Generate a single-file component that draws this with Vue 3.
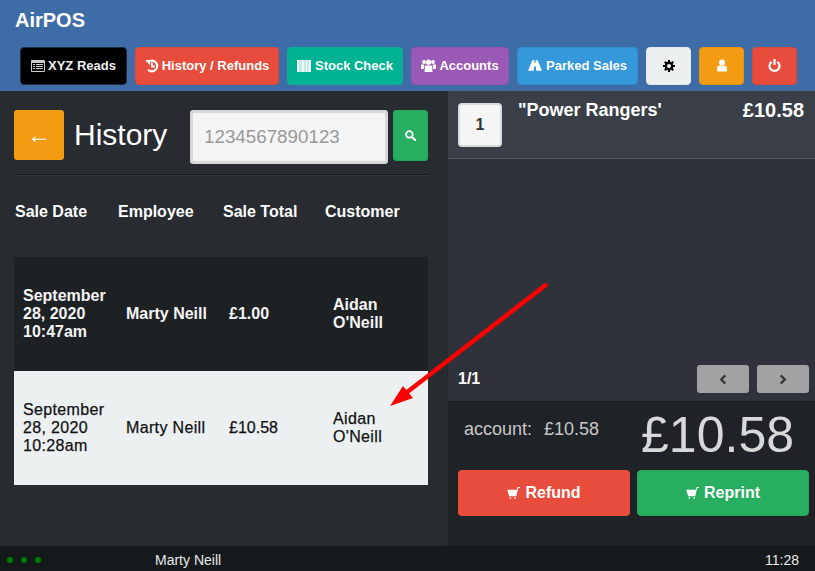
<script setup>
const rows = [
  { date: 'September 28, 2020 10:47am', emp: 'Marty Neill', total: '£1.00', cust: "Aidan O'Neill", cls: 'dark' },
  { date: 'September 28, 2020 10:28am', emp: 'Marty Neill', total: '£10.58', cust: "Aidan O'Neill", cls: 'light' }
]
</script>

<template>
  <div class="app">
    <header class="top">
      <div class="brand">AirPOS</div>
      <nav class="tools">
        <button class="btn black">
          <svg class="ic" viewBox="0 0 14 12" width="14" height="12"><path fill="currentColor" fill-rule="evenodd" d="M1 0h12a1 1 0 0 1 1 1v10a1 1 0 0 1-1 1H1a1 1 0 0 1-1-1V1a1 1 0 0 1 1-1zM1 3v8h12V3zM2 4h2v1H2zM5 4h7v1H5zM2 6h2v1H2zM5 6h7v1H5zM2 8h2v1H2zM5 8h7v1H5z"/></svg>
          XYZ Reads
        </button>
        <button class="btn red">
          <svg class="ic" viewBox="0 0 14 14" width="14" height="14"><path fill="none" stroke="currentColor" stroke-width="2.2" d="M3 3.2A5.4 5.4 0 1 1 3 10.8"/><path fill="currentColor" d="M0 1h5.5L5 6z"/><path fill="none" stroke="currentColor" stroke-width="1.8" d="M7 3.5V7.5H10"/></svg>
          History / Refunds
        </button>
        <button class="btn teal">
          <svg class="ic" viewBox="0 0 14 12" width="14" height="12"><path fill="currentColor" opacity=".75" d="M0 0h14v12H0z"/><path fill="currentColor" d="M0 0h2v12H0zM5 0h1.5v12H5zM9 0h1v12H9zM12 0h2v12h-2z"/></svg>
          Stock Check
        </button>
        <button class="btn purple">
          <svg class="ic" viewBox="0 0 15 13" width="15" height="13"><g fill="currentColor"><circle cx="3" cy="3" r="2"/><circle cx="12" cy="3" r="2"/><circle cx="7.5" cy="3.2" r="2.6"/><path d="M0 5.5h3.2L3 10H0zM15 5.5h-3.2L12 10h3zM4 6.5h7l.5 6.5h-8z"/></g></svg>
          Accounts
        </button>
        <button class="btn blue">
          <svg class="ic" viewBox="0 0 16 12" width="14" height="11"><path fill="currentColor" d="M5 0h2.3v3h1.4V0H11l5 12H9.5L9 7H7l-.5 5H0z"/></svg>
          Parked Sales
        </button>
        <button class="btn white" aria-label="Settings">
          <svg viewBox="0 0 12 12" width="12" height="12"><circle cx="6" cy="6" r="3.2" fill="none" stroke="#000" stroke-width="2.2"/><path stroke="#000" stroke-width="2.2" d="M6 0v2.4M6 9.6V12M0 6h2.4M9.6 6H12M1.8 1.8l1.7 1.7M8.5 8.5l1.7 1.7M10.2 1.8 8.5 3.5M3.5 8.5l-1.7 1.7"/></svg>
        </button>
        <button class="btn orange" aria-label="User">
          <svg viewBox="0 0 12 12" width="12" height="13"><circle cx="6" cy="3" r="3" fill="#fff"/><path fill="#fff" d="M1 12V8.5Q1 6.5 3.5 6h5Q11 6.5 11 8.5V12z"/></svg>
        </button>
        <button class="btn red" aria-label="Power">
          <svg viewBox="0 0 12 12" width="13" height="13"><path fill="none" stroke="#fff" stroke-width="2" d="M3.4 2.6a4.6 4.6 0 1 0 5.2 0"/><path stroke="#fff" stroke-width="2" d="M6 0v5.4"/></svg>
        </button>
      </nav>
    </header>

    <main class="main">
      <section class="left">
        <div class="searchbar">
          <button class="back">←</button>
          <h1 class="title">History</h1>
          <input class="search" placeholder="1234567890123" />
          <button class="go" aria-label="Search">
            <svg viewBox="0 0 12 12" width="11" height="11"><circle cx="4.8" cy="4.8" r="3.6" fill="none" stroke="#fff" stroke-width="2"/><path stroke="#fff" stroke-width="2.2" stroke-linecap="round" d="M7.6 7.6 11 11"/></svg>
          </button>
        </div>
        <div class="thead">
          <span>Sale Date</span><span>Employee</span><span>Sale Total</span><span>Customer</span>
        </div>
        <div v-for="r in rows" :key="r.total" class="row" :class="r.cls">
          <span>{{ r.date }}</span><span>{{ r.emp }}</span><span class="amount">{{ r.total }}</span><span>{{ r.cust }}</span>
        </div>
      </section>

      <section class="right">
        <div class="item">
          <div class="qty">1</div>
          <div class="name">"Power Rangers'</div>
          <div class="price">£10.58</div>
        </div>
        <div class="items-space">
          <strong class="page">1/1</strong>
          <div class="pager">
            <button class="nav" aria-label="Previous"><svg viewBox="0 0 8 12" width="8" height="11"><path fill="none" stroke="#333" stroke-width="2.4" d="M6.5 1.5 2 6l4.5 4.5"/></svg></button>
            <button class="nav" aria-label="Next"><svg viewBox="0 0 8 12" width="8" height="11"><path fill="none" stroke="#333" stroke-width="2.4" d="M1.5 1.5 6 6l-4.5 4.5"/></svg></button>
          </div>
        </div>
        <div class="totals">
          <div class="sum">
            <div class="pay"><span>account:</span><span>£10.58</span></div>
            <div class="grand">£10.58</div>
          </div>
          <div class="actions">
            <button class="act red">
              <svg viewBox="0 0 14 13" width="13" height="12"><path fill="#fff" d="M0 3h10.5l.7-2.6L14 0v1l-2 .3L10 10H2.4zM2.8 11h1.6v1.6H2.8zM8 11h1.6v1.6H8z"/></svg>
              Refund
            </button>
            <button class="act green">
              <svg viewBox="0 0 14 13" width="13" height="12"><path fill="#fff" d="M0 3h10.5l.7-2.6L14 0v1l-2 .3L10 10H2.4zM2.8 11h1.6v1.6H2.8zM8 11h1.6v1.6H8z"/></svg>
              Reprint
            </button>
          </div>
        </div>
      </section>
    </main>

    <footer class="foot">
      <div class="dots"><i></i><i></i><i></i></div>
      <span class="user">Marty Neill</span>
      <span class="clock">11:28</span>
    </footer>

    <svg class="arrow" viewBox="0 0 815 571" width="815" height="571">
      <path stroke="#f00" stroke-width="4.5" d="M547 284 406 393"/>
      <path fill="#f00" d="M390 406 403 386 413 398z"/>
    </svg>
  </div>
</template>

<style>
html, body { margin: 0; background: #282b30; }
</style>

<style scoped>
.app {
  position: relative;
  width: 815px;
  height: 571px;
  overflow: hidden;
  display: flex;
  flex-direction: column;
  font-family: "Liberation Sans", Arial, sans-serif;
  color: #fff;
  background: #282b30;
}
button { font-family: inherit; cursor: pointer; padding: 0; }

.top {
  flex: 0 0 91px;
  box-sizing: border-box;
  background: #3e6ca6;
  padding: 9px 0 0 15px;
}
.brand { font-size: 20px; font-weight: 700; line-height: 23px; }
.tools {
  margin: 15px 0 0 5px;
  display: grid;
  grid-template-columns: 107px 144px 116px 98px 121px 45px 45px 45px;
  column-gap: 8px;
  height: 38px;
}
.btn {
  display: flex;
  align-items: center;
  justify-content: center;
  gap: 3px;
  height: 38px;
  padding-bottom: 1px;
  border-radius: 4px;
  font-size: 13px;
  font-weight: 700;
  color: #fff;
  white-space: nowrap;
  border: 1px solid transparent;
  box-sizing: border-box;
}
.ic { flex: none; }
.black { background: #000; border-color: #1d2b40; color: #f0f0f0; }
.black .ic { color: #ccc; }
.red { background: #e74c3c; border-color: #d9493a; }
.teal { background: #00b294; border-color: #0fae95; gap: 4px; }
.purple { background: #9b59b6; border-color: #9354ad; }
.blue { background: #3498db; border-color: #2f8ccb; gap: 4px; }
.white { background: #ecf0f1; border-color: #e4e8ea; }
.orange { background: #f39c12; border-color: #e6940f; }

.main { flex: 1; display: flex; min-height: 0; }
.left {
  flex: 0 0 448px;
  min-width: 0;
  box-sizing: border-box;
  padding: 19px 20px 0 14px;
  background: #282b30;
  box-shadow: inset -1px 0 0 #24272b;
}
.searchbar {
  display: flex;
  align-items: flex-start;
  height: 64px;
  border-bottom: 1px solid #17191c;
  box-shadow: 0 1px 0 #33363b;
}
.back {
  flex: none;
  width: 50px;
  height: 50px;
  border: none;
  border-radius: 3px;
  background: #f39c12;
  color: #fff;
  font-size: 24px;
  line-height: 50px;
}
.title {
  margin: 0 24px 0 10px;
  width: 92px;
  font-size: 30px;
  font-weight: 400;
  line-height: 50px;
  white-space: nowrap;
}
.search {
  width: 198px;
  height: 54px;
  box-sizing: border-box;
  padding: 0 11px;
  background: #f5f5f5;
  border: 3px solid #d8d8d8;
  border-radius: 3px;
  font-family: inherit;
  font-size: 18.8px;
  outline: none;
}
.search::placeholder { color: #999; opacity: 1; }
.go {
  margin-left: 5px;
  width: 35px;
  height: 51px;
  border: 1px solid #25a65b;
  border-radius: 3px;
  background: #27ae60;
  display: flex;
  align-items: center;
  justify-content: center;
}
.thead, .row {
  display: grid;
  grid-template-columns: 103px 105px 102px 104px;
}
.thead {
  height: 82px;
  padding-top: 27px;
  box-sizing: border-box;
  font-size: 16px;
  font-weight: 700;
  line-height: 20px;
}
.thead span { padding-left: 1px; }
.row {
  height: 114px;
  align-items: center;
  font-size: 16px;
  line-height: 18px;
}
.row span { padding: 0 8px 0 9px; }
.row .amount { padding-left: 7px; letter-spacing: 0; }
.dark { background: #1e2124; font-weight: 700; color: #f4f4f4; }
.light { background: #ecf0f1; color: #111; letter-spacing: .35px; -webkit-text-stroke: .25px #111; }

.right { flex: 1; display: flex; flex-direction: column; min-width: 0; }
.item {
  flex: 0 0 68px;
  box-sizing: border-box;
  display: flex;
  align-items: flex-start;
  padding: 12px 11px 0 10px;
  background: #3a3f47;
  border-bottom: 1px solid #555a60;
}
.qty {
  flex: none;
  width: 44px;
  height: 44px;
  box-sizing: border-box;
  display: flex;
  align-items: center;
  justify-content: center;
  background: #f5f5f5;
  border: 2px solid #dadada;
  border-radius: 4px;
  color: #333;
  font-size: 16px;
  font-weight: 700;
}
.name { margin: -3px 0 0 16px; flex: 1; font-size: 18px; font-weight: 700; line-height: 20px; }
.price { margin-top: -3px; font-size: 20px; font-weight: 700; line-height: 20px; }
.items-space {
  flex: 0 0 243px;
  box-sizing: border-box;
  display: flex;
  align-items: flex-end;
  justify-content: space-between;
  padding: 0 6px 8px 10px;
  background: #2f323a;
  border-bottom: 1px solid #1a1c20;
}
.page { font-size: 16px; line-height: 20px; margin-bottom: 4px; }
.pager { display: flex; gap: 8px; }
.nav {
  width: 52px;
  height: 28px;
  border: none;
  border-radius: 3px;
  background: #a1a2a4;
  display: flex;
  align-items: center;
  justify-content: center;
}
.totals {
  flex: 1;
  box-sizing: border-box;
  padding: 0 6px 0 10px;
  background: #1f2227;
}
.sum { display: flex; justify-content: space-between; height: 68px; }
.pay {
  margin: 17px 0 0 6px;
  display: flex;
  gap: 12px;
  font-size: 18px;
  line-height: 20px;
  color: #c8c8c8;
}
.grand {
  margin: 4px 15px 0 0;
  font-size: 50px;
  line-height: 58px;
  color: #d8d8d8;
}
.actions { display: grid; grid-template-columns: 172px 172px; column-gap: 7px; }
.act {
  height: 46px;
  border-radius: 4px;
  display: flex;
  align-items: center;
  justify-content: center;
  gap: 5px;
  font-size: 16px;
  font-weight: 700;
  color: #fff;
  border: 1px solid transparent;
  box-sizing: border-box;
}
.green { background: #27ae60; border-color: #25a65b; }

.foot {
  flex: 0 0 26px;
  box-sizing: border-box;
  display: flex;
  align-items: center;
  background: #16191c;
  border-top: 1px solid #24272b;
  font-size: 14px;
  color: #e8e8e8;
  padding: 0 16px 0 7px;
}
.dots { display: flex; gap: 8px; width: 148px; margin-top: 3px; }
.dots i { width: 6px; height: 6px; border-radius: 50%; background: #008000; }
.user { flex: 1; margin-top: 2px; }
.clock { margin-top: 2px; }

.arrow { position: absolute; left: 0; top: 0; pointer-events: none; }
</style>
